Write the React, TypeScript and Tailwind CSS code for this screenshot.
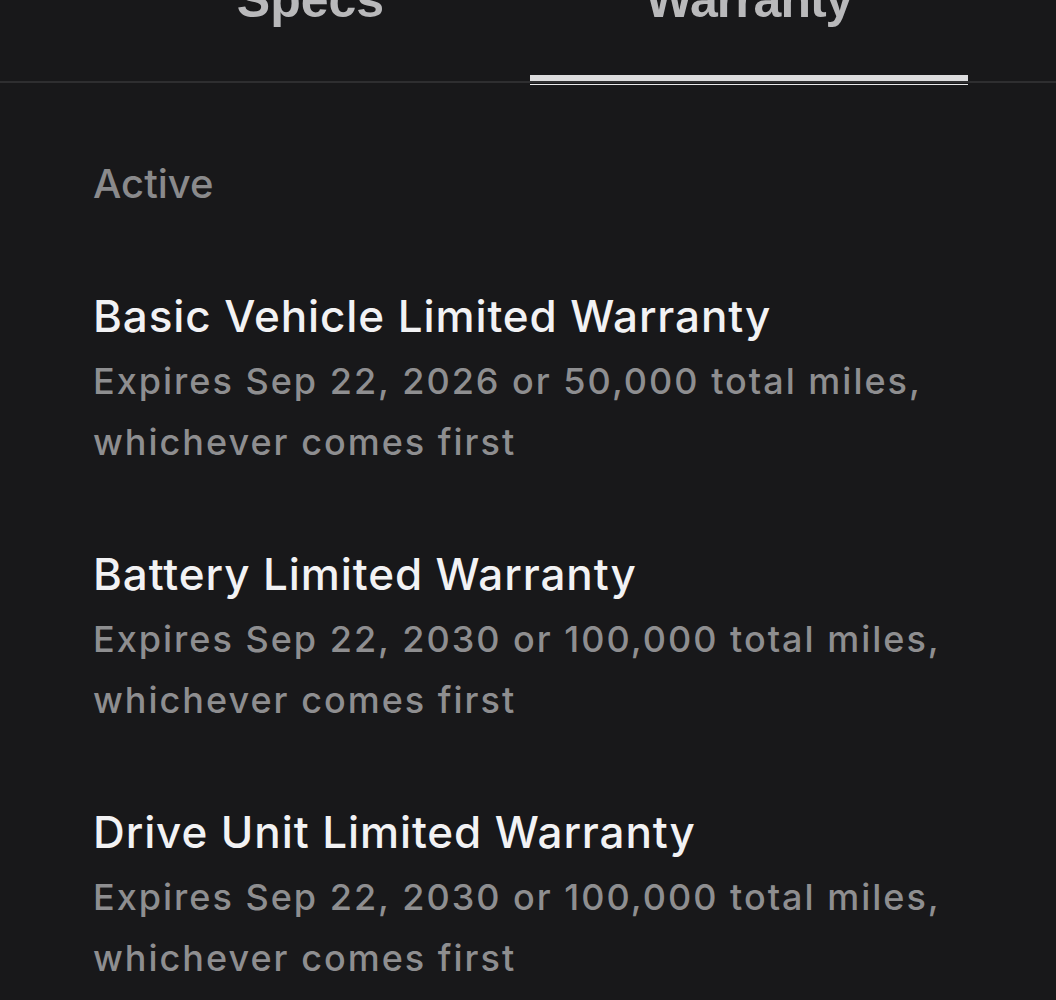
const warranties = [
  { title: 'Basic Vehicle Limited Warranty', detail: 'Expires Sep 22, 2026 or 50,000 total miles, whichever comes first' },
  { title: 'Battery Limited Warranty', detail: 'Expires Sep 22, 2030 or 100,000 total miles, whichever comes first' },
  { title: 'Drive Unit Limited Warranty', detail: 'Expires Sep 22, 2030 or 100,000 total miles, whichever comes first' },
];

export default function App() {
  return (
    <div className="h-[1000px] w-[1056px] overflow-hidden bg-[#18181a] font-['Inter',sans-serif]">
      {/* Tabs */}
      <div className="relative h-[83px] border-b-2 border-[#2e2e30]">
        <div className="flex pl-[91px]">
          <div className="flex w-[439px] justify-center">
            <span className="-mt-[30px] font-['Liberation_Sans',sans-serif] text-[50px] leading-[60px] font-bold text-[#b9b9bb]">Specs</span>
          </div>
          <div className="relative flex h-[81px] w-[438px] justify-center">
            <span className="-mt-[30px] font-['Liberation_Sans',sans-serif] text-[50px] leading-[60px] font-bold tracking-[-1px] text-[#b9b9bb]">Warranty</span>
            <div className="absolute bottom-0 left-0 right-0 h-[6px] bg-[#dcdcde]" />
            <div className="absolute -bottom-[4px] left-0 right-0 h-[1px] bg-[#e8e8ea]" />
          </div>
        </div>
      </div>

      <div className="pl-[93px] pr-[40px] pt-[78px]">
        <div className="text-[40px] leading-[46px] font-medium text-[#8a8a8c]">Active</div>

        <div className="mt-[81px] flex flex-col gap-[73px]">
          {warranties.map((w) => (
            <div key={w.title}>
              <div className="text-[44px] leading-[56px] font-medium tracking-[0.9px] text-[#f2f2f4]">{w.title}</div>
              <div className="mt-[7px] max-w-[900px] text-[36px] leading-[61px] font-medium tracking-[2px] text-[#8e8e90]">{w.detail}</div>
            </div>
          ))}
        </div>
      </div>
    </div>
  );
}
